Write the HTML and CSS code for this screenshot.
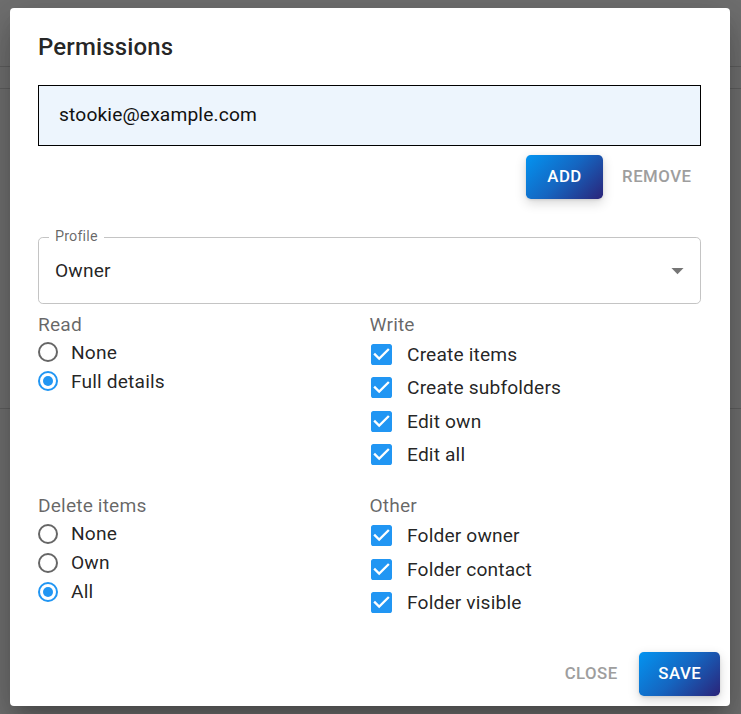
FILE: index.html
```html
<!DOCTYPE html>
<html lang="en">
<head>
<meta charset="utf-8">
<title>Permissions</title>
<link rel="stylesheet" href="styles.css">
</head>
<body>
<div class="dialog">
  <h2 class="title">Permissions</h2>
  <div class="email-field">stookie@example.com</div>
  <div class="row-actions">
    <button class="btn btn-contained">ADD</button>
    <button class="btn btn-text">REMOVE</button>
  </div>
  <div class="select">
    <span class="select-label">Profile</span>
    <span class="select-value">Owner</span>
    <svg class="select-arrow" viewBox="0 0 24 24" width="29" height="29"><path d="M7 10l5 5 5-5z"/></svg>
  </div>
  <div class="perm-grid">
    <div class="group">
      <div class="group-label">Read</div>
      <div class="radio-item"><svg class="radio" viewBox="2 2 20 20" width="20" height="20"><circle cx="12" cy="12" r="9"/></svg><span>None</span></div>
      <div class="radio-item on"><svg class="radio" viewBox="2 2 20 20" width="20" height="20"><circle cx="12" cy="12" r="9"/><circle class="dot" cx="12" cy="12" r="5"/></svg><span>Full details</span></div>
    </div>
    <div class="group">
      <div class="group-label">Write</div>
      <div class="check-item"><svg class="check" viewBox="3 3 18 18" width="21" height="21"><path d="M19 3H5c-1.11 0-2 .9-2 2v14c0 1.1.89 2 2 2h14c1.11 0 2-.9 2-2V5c0-1.1-.89-2-2-2zm-9 14l-5-5 1.41-1.41L10 14.17l7.59-7.59L19 8l-9 9z"/></svg><span>Create items</span></div>
      <div class="check-item"><svg class="check" viewBox="3 3 18 18" width="21" height="21"><path d="M19 3H5c-1.11 0-2 .9-2 2v14c0 1.1.89 2 2 2h14c1.11 0 2-.9 2-2V5c0-1.1-.89-2-2-2zm-9 14l-5-5 1.41-1.41L10 14.17l7.59-7.59L19 8l-9 9z"/></svg><span>Create subfolders</span></div>
      <div class="check-item"><svg class="check" viewBox="3 3 18 18" width="21" height="21"><path d="M19 3H5c-1.11 0-2 .9-2 2v14c0 1.1.89 2 2 2h14c1.11 0 2-.9 2-2V5c0-1.1-.89-2-2-2zm-9 14l-5-5 1.41-1.41L10 14.17l7.59-7.59L19 8l-9 9z"/></svg><span>Edit own</span></div>
      <div class="check-item"><svg class="check" viewBox="3 3 18 18" width="21" height="21"><path d="M19 3H5c-1.11 0-2 .9-2 2v14c0 1.1.89 2 2 2h14c1.11 0 2-.9 2-2V5c0-1.1-.89-2-2-2zm-9 14l-5-5 1.41-1.41L10 14.17l7.59-7.59L19 8l-9 9z"/></svg><span>Edit all</span></div>
    </div>
    <div class="group">
      <div class="group-label">Delete items</div>
      <div class="radio-item"><svg class="radio" viewBox="2 2 20 20" width="20" height="20"><circle cx="12" cy="12" r="9"/></svg><span>None</span></div>
      <div class="radio-item"><svg class="radio" viewBox="2 2 20 20" width="20" height="20"><circle cx="12" cy="12" r="9"/></svg><span>Own</span></div>
      <div class="radio-item on"><svg class="radio" viewBox="2 2 20 20" width="20" height="20"><circle cx="12" cy="12" r="9"/><circle class="dot" cx="12" cy="12" r="5"/></svg><span>All</span></div>
    </div>
    <div class="group">
      <div class="group-label">Other</div>
      <div class="check-item"><svg class="check" viewBox="3 3 18 18" width="21" height="21"><path d="M19 3H5c-1.11 0-2 .9-2 2v14c0 1.1.89 2 2 2h14c1.11 0 2-.9 2-2V5c0-1.1-.89-2-2-2zm-9 14l-5-5 1.41-1.41L10 14.17l7.59-7.59L19 8l-9 9z"/></svg><span>Folder owner</span></div>
      <div class="check-item"><svg class="check" viewBox="3 3 18 18" width="21" height="21"><path d="M19 3H5c-1.11 0-2 .9-2 2v14c0 1.1.89 2 2 2h14c1.11 0 2-.9 2-2V5c0-1.1-.89-2-2-2zm-9 14l-5-5 1.41-1.41L10 14.17l7.59-7.59L19 8l-9 9z"/></svg><span>Folder contact</span></div>
      <div class="check-item"><svg class="check" viewBox="3 3 18 18" width="21" height="21"><path d="M19 3H5c-1.11 0-2 .9-2 2v14c0 1.1.89 2 2 2h14c1.11 0 2-.9 2-2V5c0-1.1-.89-2-2-2zm-9 14l-5-5 1.41-1.41L10 14.17l7.59-7.59L19 8l-9 9z"/></svg><span>Folder visible</span></div>
    </div>
  </div>
  <div class="dialog-actions">
    <button class="btn btn-text">CLOSE</button>
    <button class="btn btn-contained">SAVE</button>
  </div>
</div>
</body>
</html>
```
FILE: styles.css
```css
html, body {
  height: 100%;
}
body {
  margin: 0;
  overflow: hidden;
  font-family: Roboto, "Liberation Sans", sans-serif;
  background:
    linear-gradient(#5f5f5f, #5f5f5f) 0 66px / 100% 1px no-repeat,
    linear-gradient(#5f5f5f, #5f5f5f) 0 88px / 100% 1px no-repeat,
    linear-gradient(#5f5f5f, #5f5f5f) 0 408px / 100% 1px no-repeat,
    #707070;
}
.dialog {
  box-sizing: border-box;
  margin: 8px 0 0 10px;
  width: 720px;
  height: 697.6px;
  background: #fff;
  border-radius: 4px;
  box-shadow: 0 11px 15px -7px rgba(0,0,0,.2), 0 24px 38px 3px rgba(0,0,0,.14), 0 9px 46px 8px rgba(0,0,0,.12);
  padding: 0 29px 0 28px;
  display: flex;
  flex-direction: column;
}
.title {
  margin: 22.8px 0 0;
  font-size: 24px;
  line-height: 32px;
  font-weight: 500;
  color: rgba(0,0,0,.87);
  letter-spacing: 0.15px;
}
.email-field {
  box-sizing: border-box;
  margin-top: 22.2px;
  height: 61px;
  border: 1.2px solid #000;
  background: #edf5fd;
  padding-left: 20px;
  padding-bottom: 1.5px;
  display: flex;
  align-items: center;
  font-size: 19.2px;
  color: #111;
  letter-spacing: 0.15px;
}
.row-actions {
  margin-top: 9px;
  display: flex;
  justify-content: flex-end;
  gap: 9.6px;
}
.btn {
  min-width: 76.8px;
  font-family: Roboto, "Liberation Sans", sans-serif;
  font-size: 16.8px;
  font-weight: 500;
  letter-spacing: 0.48px;
  line-height: 29.4px;
  border: 0;
  border-radius: 4.8px;
  background: none;
  cursor: pointer;
}
.btn-contained {
  padding: 7.2px 19.2px;
  color: #fff;
  background: linear-gradient(135deg, #0394f1 0%, #1565c0 50%, #2b2479 100%);
  box-shadow: 0 4px 12px rgba(0,0,0,.16), 0 1px 3px rgba(0,0,0,.1);
}
.btn-text {
  padding: 7.2px 9.6px;
  color: #9e9e9e;
}
.select {
  position: relative;
  box-sizing: border-box;
  margin-top: 38px;
  height: 67.2px;
  border: 1px solid #c4c4c4;
  border-radius: 4.8px;
  padding-left: 16px;
  display: flex;
  align-items: center;
}
.select-label {
  position: absolute;
  left: 10px;
  top: -10px;
  padding: 0 6px;
  background: #fff;
  font-size: 14.4px;
  line-height: 18px;
  color: rgba(0,0,0,.6);
  letter-spacing: 0.15px;
}
.select-value {
  font-size: 19.2px;
  color: rgba(0,0,0,.87);
  letter-spacing: 0.15px;
}
.select-arrow {
  margin-left: auto;
  margin-right: 8px;
  fill: rgba(0,0,0,.54);
}
.perm-grid {
  margin-top: 7px;
  display: grid;
  grid-template-columns: 1fr 1fr;
  row-gap: 21px;
}
.group {
  display: flex;
  flex-direction: column;
}
.group-label {
  font-size: 19.2px;
  line-height: 27px;
  color: rgba(0,0,0,.6);
  letter-spacing: 0.15px;
}
.radio-item, .check-item {
  display: flex;
  align-items: center;
  font-size: 19.2px;
  color: rgba(0,0,0,.87);
  letter-spacing: 0.15px;
}
.radio-item {
  height: 29px;
}
.check-item {
  height: 33.5px;
  padding-left: 1.5px;
}
.group-label + .check-item {
  margin-top: -0.6px;
}
.radio {
  margin-right: 13px;
  flex: none;
}
.radio circle {
  fill: none;
  stroke: rgba(0,0,0,.6);
  stroke-width: 2;
}
.radio-item.on .radio circle {
  stroke: #2196f3;
}
.radio-item.on .radio .dot {
  fill: #2196f3;
  stroke: none;
}
.check {
  margin-right: 15px;
  flex: none;
  fill: #2196f3;
}
.dialog-actions {
  margin-top: auto;
  display: flex;
  justify-content: flex-end;
  gap: 9.6px;
  padding: 9.6px 0;
  margin-right: -19.4px;
}
```
